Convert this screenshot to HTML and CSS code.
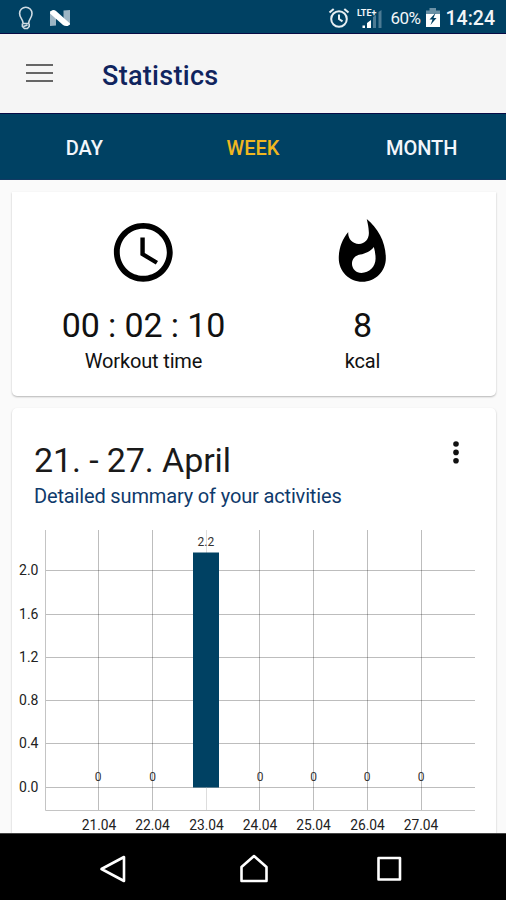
FILE: index.html
```
<!DOCTYPE html>
<html lang="en">
<head>
  <meta charset="UTF-8" />
  <meta name="viewport" content="width=device-width, initial-scale=1.0">
  <title>Statistics</title>
  <link rel="stylesheet" href="styles.css">
</head>
<body>
  <div class="statusbar">
    <svg class="icon-bulb" width="16" height="24" viewBox="0 0 16 24">
      <path d="M5 17C5 13 1.6 12 1.6 7.4a6.2 6.2 0 0 1 12.4 0C14 12 10.7 13 10.7 17" />
      <path d="M4.4 17.5h6.8M4.4 17.5v3l2 2h3l1.8-2v-3M5.5 20.5l4-1.5" />
    </svg>
    <svg class="icon-n" width="22" height="18" viewBox="0 0 22 18">
      <path class="n-side" d="M1 2h6v14.5L1 17zM14.5 1.5L21 1v15h-6.5z" />
      <path class="n-bar" d="M1 4.5C1 1.5 4.5 0 7 2l14 12.5c0 2.500-4.500 3.500-7 1.500z" />
    </svg>
    <span class="spacer"></span>
    <svg class="icon-alarm" width="22" height="22" viewBox="0 0 22 22">
      <circle cx="11" cy="12" r="7.8" />
      <path d="M11 7.5V12l3.5 2.3M1.5 5.6l4.2-3.7M20.5 5.6l-4.2-3.7" />
    </svg>
    <svg class="icon-signal" width="26" height="24" viewBox="0 0 26 24">
      <path class="bar-on" d="M5.5 22v-2.5H8V22zM10 22v-5l4-3v8z" />
      <path class="bar-off" d="M16 22V11l3-2v13zM21.5 22V6l3-2v18z" />
      <text x="0" y="9.5">LTE+</text>
    </svg>
    <span class="battery-text">60%</span>
    <svg class="icon-battery" width="16" height="20" viewBox="0 0 16 20">
      <path class="cap" d="M4.5 0h6.5v2.5H15V7H1V2.5h3.5z" />
      <path class="fill" d="M1 6h14v13H1z" />
      <path class="bolt" d="M10.5 5L4.5 11.5h3L5.5 17l6-7h-3z" />
    </svg>
    <span class="clock">14:24</span>
  </div>

  <header class="toolbar">
    <div class="menu-icon"><span></span><span></span><span></span></div>
    <h1>Statistics</h1>
  </header>

  <nav class="tabs">
    <a>DAY</a>
    <a class="active">WEEK</a>
    <a>MONTH</a>
  </nav>

  <main class="content">
    <section class="card summary">
      <div class="stat">
        <svg width="70.6" height="70.6" viewBox="0 0 24 24">
          <path d="M11.99 2C6.47 2 2 6.48 2 12s4.47 10 9.99 10C17.52 22 22 17.52 22 12S17.52 2 11.99 2zM12 20c-4.42 0-8-3.58-8-8s3.58-8 8-8 8 3.58 8 8-3.58 8-8 8zM12.5 7H11v6l5.25 3.15.75-1.23-4.5-2.67z" />
        </svg>
        <div class="value">00 : 02 : 10</div>
        <div class="label">Workout time</div>
      </div>
      <div class="stat">
        <svg width="70.6" height="70.6" viewBox="0 0 24 24">
          <path d="M13.5.67s.74 2.65.74 4.8c0 2.06-1.35 3.73-3.41 3.73-2.07 0-3.63-1.67-3.63-3.73l.03-.36C5.21 7.51 4 10.62 4 14c0 4.42 3.58 8 8 8s8-3.58 8-8C20 8.61 17.41 3.8 13.5.67zM11.71 19c-1.78 0-3.22-1.4-3.22-3.14 0-1.62 1.05-2.76 2.81-3.12 1.77-.36 3.6-1.21 4.62-2.58.39 1.29.59 2.65.59 4.04 0 2.65-2.15 4.8-4.8 4.8z" />
        </svg>
        <div class="value">8</div>
        <div class="label">kcal</div>
      </div>
    </section>

    <section class="card week">
      <div class="week-head">
        <div>
          <h2>21. - 27. April</h2>
          <p>Detailed summary of your activities</p>
        </div>
        <svg class="more" width="8" height="24" viewBox="0 0 8 24">
          <circle cx="4" cy="4" r="2.8" />
          <circle cx="4" cy="12.4" r="2.8" />
          <circle cx="4" cy="20.8" r="2.8" />
        </svg>
      </div>

      <svg class="chart" width="484" height="310" viewBox="1 0 484 310">
        <g class="grid">
          <path d="M34 47.5h430M34 91.5h430M34 134.5h430M34 177.5h430M34 220.5h430M34 264.5h430" />
          <path d="M87.5 7v280M141.5 7v280M248.5 7v280M302.5 7v280M356.5 7v280M410.5 7v280" />
          <path class="light" d="M195.5 7v280" />
          <path class="axis" d="M34.5 7v280.5h429.5" />
        </g>
        <rect class="bar" x="182" y="29.5" width="26" height="235" />
        <g class="y-labels">
          <text x="27.5" y="52">2.0</text>
          <text x="27.5" y="96">1.6</text>
          <text x="27.5" y="139">1.2</text>
          <text x="27.5" y="182">0.8</text>
          <text x="27.5" y="225">0.4</text>
          <text x="27.5" y="268.5">0.0</text>
        </g>
        <g class="x-labels">
          <text x="88" y="306.5">21.04</text>
          <text x="141.5" y="306.5">22.04</text>
          <text x="195.5" y="306.5">23.04</text>
          <text x="249" y="306.5">24.04</text>
          <text x="302.5" y="306.5">25.04</text>
          <text x="356.5" y="306.5">26.04</text>
          <text x="410" y="306.5">27.04</text>
        </g>
        <g class="values">
          <text x="87" y="258">0</text>
          <text x="141.5" y="258">0</text>
          <text x="194.8" y="23">2.2</text>
          <text x="249" y="258">0</text>
          <text x="302.5" y="258">0</text>
          <text x="356" y="258">0</text>
          <text x="410" y="258">0</text>
        </g>
      </svg>
    </section>
  </main>

  <footer class="navbar">
    <svg width="30" height="32" viewBox="0 0 30 32">
      <path d="M26 4v24L3.5 16z" />
    </svg>
    <svg class="home" width="30" height="32" viewBox="0 0 30 32">
      <path d="M15 3l12.500 11v14h-25v-14z" />
    </svg>
    <svg width="30" height="32" viewBox="0 0 30 32">
      <path d="M4.5 5h21.500v21.500h-21.500z" />
    </svg>
  </footer>
</body>
</html>
```
FILE: styles.css
```
* {
  box-sizing: border-box;
}

body {
  font-family: Roboto, "Liberation Sans", sans-serif;
  background-color: #fafafa;
  margin: 0;
  height: 900px;
  display: flex;
  flex-direction: column;
  overflow: hidden;
}

h1, h2, p {
  margin: 0;
  font-weight: normal;
}

svg {
  display: block;
  flex-shrink: 0;
}

/* status bar */
.statusbar {
  height: 34px;
  flex-shrink: 0;
  background-color: #004163;
  border-bottom: 1px solid #080b45;
  display: flex;
  align-items: center;
  padding: 2px 11px 0 18px;
  color: #f1f5f8;
}

.spacer {
  flex: 1;
}

.icon-bulb {
  fill: none;
  stroke: #cfdbe3;
  stroke-width: 1.6;
}

.icon-n {
  margin-left: 15px;
}

.n-side {
  fill: #9db5c4;
}

.n-bar {
  fill: #fff;
}

.icon-alarm {
  fill: none;
  stroke: #e8eff3;
  stroke-width: 2;
}

.icon-signal {
  margin-left: 7px;
}

.icon-signal text {
  font-size: 9px;
  font-weight: bold;
  fill: #f1f5f8;
}

.bar-on {
  fill: #fff;
}

.bar-off {
  fill: #4d7b94;
}

.battery-text {
  font-size: 17px;
  margin-left: 7px;
  letter-spacing: -0.5px;
}

.icon-battery {
  margin-left: 4px;
}

.icon-battery .cap {
  fill: #6b91a6;
}

.icon-battery .fill {
  fill: #fff;
}

.icon-battery .bolt {
  fill: #004163;
}

.clock {
  font-size: 19.5px;
  font-weight: 500;
  margin-left: 5px;
  padding-top: 1px;
}

/* toolbar */
.toolbar {
  height: 79px;
  flex-shrink: 0;
  background-color: #f5f5f5;
  display: flex;
  align-items: center;
  padding: 0 26px;
}

.menu-icon {
  width: 27px;
  display: flex;
  flex-direction: column;
  gap: 6px;
  margin-bottom: 1px;
}

.menu-icon span {
  height: 2px;
  background-color: #666;
}

.toolbar h1 {
  font-size: 27px;
  font-weight: 500;
  letter-spacing: 0.3px;
  color: #10245e;
  margin-left: 49px;
  padding-top: 4px;
}

/* tabs */
.tabs {
  height: 67px;
  flex-shrink: 0;
  background-color: #004163;
  border-top: 1px solid #080b45;
  border-bottom: 1px solid #123a63;
  display: flex;
  align-items: center;
  padding-top: 2px;
}

.tabs a {
  flex: 1;
  text-align: center;
  color: #f3f6fb;
  font-size: 20px;
  font-weight: 500;
}

.tabs .active {
  color: #efb71f;
}

/* cards */
.content {
  flex: 1;
  min-height: 0;
  overflow: hidden;
  padding: 12px 10px 0 12px;
}

.card {
  background-color: #fff;
  border-radius: 5px;
  box-shadow: 0 1px 2px rgba(0, 0, 0, 0.28);
  width: 484px;
}

.summary {
  height: 204px;
  border-radius: 0 0 5px 5px;
  display: flex;
  padding: 25px 24px 0 22px;
}

.stat {
  flex: 1;
  display: flex;
  flex-direction: column;
  align-items: center;
}

.value {
  font-size: 34px;
  line-height: 40px;
  letter-spacing: -0.1px;
  margin-top: 17px;
  color: #111;
}

.label {
  font-size: 20px;
  line-height: 24px;
  letter-spacing: -0.15px;
  margin-top: 4px;
  color: #111;
}

.week {
  margin-top: 12px;
  height: 460px;
}

.week-head {
  height: 115px;
  display: flex;
  justify-content: space-between;
  padding: 32px 36px 0 22px;
}

.week-head h2 {
  font-size: 34px;
  line-height: 40px;
  letter-spacing: -0.1px;
  color: #1a1a1a;
}

.week-head p {
  font-size: 20px;
  line-height: 24px;
  letter-spacing: -0.15px;
  margin-top: 4px;
  color: #0f3a6b;
}

.more {
  fill: #111;
}

/* chart */
.grid path {
  fill: none;
  stroke: rgba(0, 0, 0, 0.26);
  stroke-width: 1;
}

.grid .light {
  stroke: #ddd;
}

.grid .axis {
  stroke: #c4c4c4;
}

.bar {
  fill: #004163;
}

.y-labels text {
  font-size: 14px;
  text-anchor: end;
  fill: #222;
}

.x-labels text {
  font-size: 13.8px;
  text-anchor: middle;
  fill: #222;
}

.values text {
  font-size: 12px;
  text-anchor: middle;
  fill: #333;
}

/* bottom navigation */
.navbar {
  height: 67px;
  flex-shrink: 0;
  background-color: #000;
  border-top: 1px solid #444;
  display: flex;
  justify-content: space-between;
  align-items: center;
  padding: 3px 102px 0 98px;
}

.navbar svg {
  fill: none;
  stroke: #fff;
  stroke-width: 2.6;
  stroke-linejoin: round;
}

.navbar .home {
  margin-left: 5px;
}
```
